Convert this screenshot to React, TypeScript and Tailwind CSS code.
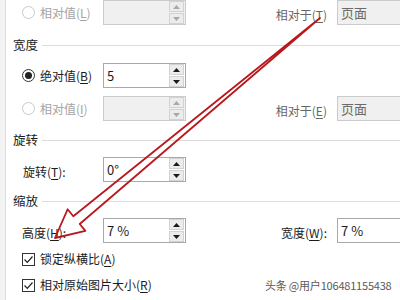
import React from "react";

function Arrow({ up, disabled }: { up?: boolean; disabled?: boolean }) {
  const c = disabled ? "#a8a8a8" : "#1a1a1a";
  return (
    <div className="w-[15px] h-[11px] bg-[#ececec] border border-[#d2d2d2] flex items-center justify-center">
      <svg width="7" height="4" viewBox="0 0 7 4">
        <path d={up ? "M0 4 L3.5 0 L7 4Z" : "M0 0 L3.5 4 L7 0Z"} fill={c} />
      </svg>
    </div>
  );
}

function Box({ value, disabled, spin, className }: { value?: string; disabled?: boolean; spin?: boolean; className?: string }) {
  return (
    <div
      className={
        "h-[25px] flex items-center border " +
        (disabled ? "bg-[#f0f0f0] border-[#cbcbcb] text-[#6a6a6a] " : "bg-white border-[#a9a9a9] text-[#1b1b1b] ") +
        (className ?? "")
      }
    >
      <span className="flex-1 pl-[3px] text-[13px]">{value}</span>
      {spin && (
        <div className="flex flex-col gap-[1px] mr-[1px]">
          <Arrow up disabled={disabled} />
          <Arrow disabled={disabled} />
        </div>
      )}
    </div>
  );
}

function Radio({ checked, disabled }: { checked?: boolean; disabled?: boolean }) {
  return (
    <div
      className={
        "w-[13px] h-[13px] rounded-full border flex items-center justify-center bg-white " +
        (disabled ? "border-[#c8c8c8]" : "border-[#333]")
      }
    >
      {checked && <div className="w-[7px] h-[7px] rounded-full bg-[#222]" />}
    </div>
  );
}

function Check() {
  return (
    <div className="w-[13px] h-[13px] border border-[#333] bg-white flex items-center justify-center">
      <svg width="11" height="11" viewBox="0 0 11 11">
        <path d="M1.5 5.5 L4.3 8.3 L9.5 2.5" stroke="#222" strokeWidth="1.2" fill="none" />
      </svg>
    </div>
  );
}

function Label({ text, k, disabled }: { text: string; k: string; disabled?: boolean }) {
  return (
    <span className={"text-[12px] " + (disabled ? "text-[#a3a3a3]" : "text-[#1b1b1b]")}>
      {text}(<span className="underline underline-offset-2">{k}</span>)
    </span>
  );
}

function Heading({ text }: { text: string }) {
  return (
    <div className="h-[20px] flex items-center pl-[7px]">
      <span className="text-[12.5px] text-[#1b1b1b]">{text}</span>
      <div className="flex-1 h-px bg-[#dcdcdc] ml-[4px]" />
    </div>
  );
}

function RightPart({ label, k, value, disabled }: { label: string; k: string; value: string; disabled?: boolean }) {
  return (
    <>
      <div className="w-[151px] shrink-0 text-right pr-[10px]">
        <span className={"text-[12px] " + (disabled ? "text-[#666]" : "text-[#1b1b1b]")}>
          {label}(<span className="underline underline-offset-2">{k}</span>)
          {!disabled && ":"}
        </span>
      </div>
      <Box value={value} disabled={disabled} className="w-[75px] shrink-0" />
    </>
  );
}

export default function App() {
  return (
    <div className="w-[400px] h-[300px] overflow-hidden relative bg-white flex font-['Noto_Sans_CJK_SC','Noto_Sans',sans-serif]">
      <div className="w-[6px] bg-[#f3f3f3] border-r border-[#dedede] shrink-0" />
      <div className="flex-1 min-w-0 flex flex-col">
        {/* 相对值 (L) */}
        <div className="h-[25px] flex items-center">
          <div className="w-[97px] shrink-0 flex items-center gap-[5px] pl-[16px]">
            <Radio disabled />
            <Label text="相对值" k="L" disabled />
          </div>
          <Box disabled spin className="w-[83px] shrink-0" />
          <RightPart label="相对于" k="T" value="页面" disabled />
        </div>

        <div className="h-[10px]" />
        <Heading text="宽度" />
        <div className="h-[8px]" />

        <div className="h-[25px] flex items-center">
          <div className="w-[97px] shrink-0 flex items-center gap-[5px] pl-[16px]">
            <Radio checked />
            <Label text="绝对值" k="B" />
          </div>
          <Box value="5" spin className="w-[83px] shrink-0" />
        </div>
        <div className="h-[8px]" />
        <div className="h-[25px] flex items-center">
          <div className="w-[97px] shrink-0 flex items-center gap-[5px] pl-[16px]">
            <Radio disabled />
            <Label text="相对值" k="I" disabled />
          </div>
          <Box disabled spin className="w-[83px] shrink-0" />
          <RightPart label="相对于" k="E" value="页面" disabled />
        </div>

        <div className="h-[9px]" />
        <Heading text="旋转" />
        <div className="h-[7px]" />

        <div className="h-[25px] flex items-center">
          <div className="w-[97px] shrink-0 pl-[17px]">
            <span className="text-[12px] text-[#1b1b1b]">
              旋转(<span className="underline underline-offset-2">T</span>):
            </span>
          </div>
          <Box value="0°" spin className="w-[83px] shrink-0" />
        </div>

        <div className="h-[9px]" />
        <Heading text="缩放" />
        <div className="h-[7px]" />

        <div className="h-[25px] flex items-center">
          <div className="w-[97px] shrink-0 pl-[16px]">
            <span className="text-[12px] text-[#1b1b1b]">
              高度(<span className="underline underline-offset-2">H</span>):
            </span>
          </div>
          <Box value="7 %" spin className="w-[83px] shrink-0" />
          <RightPart label="宽度" k="W" value="7 %" />
        </div>

        <div className="h-[8px]" />
        <div className="h-[16px] flex items-center gap-[5px] pl-[16px]">
          <Check />
          <Label text="锁定纵横比" k="A" />
        </div>
        <div className="h-[10px]" />
        <div className="h-[16px] flex items-center gap-[5px] pl-[16px]">
          <Check />
          <Label text="相对原始图片大小" k="R" />
        </div>
      </div>

      <span className="absolute left-[265px] top-[277px] text-[11px] tracking-[-0.2px] text-[#5a5a5a]">头条 @用户106481155438</span>

      <svg className="absolute inset-0 pointer-events-none" width="400" height="300" viewBox="0 0 400 300">
        <polygon
          points="320,18 79.7,224 85.4,230.9 55,238 67.6,209.3 73.3,216.3"
          fill="none"
          stroke="#b8191d"
          strokeWidth="1.8"
          strokeLinejoin="round"
        />
      </svg>
    </div>
  );
}
